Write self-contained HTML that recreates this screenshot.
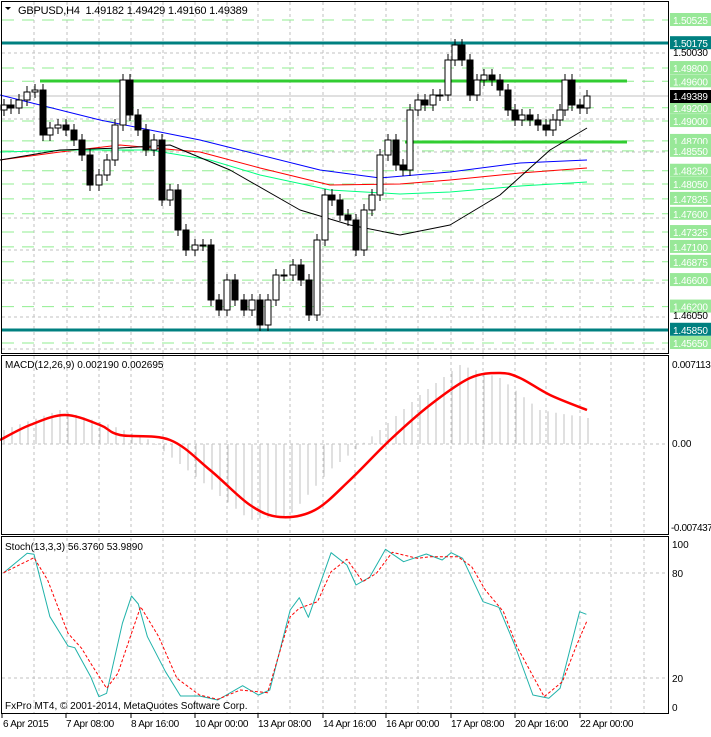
<!DOCTYPE html><html><head><style>
body{margin:0;background:#fff;width:711px;height:732px;overflow:hidden;font-family:"Liberation Sans",sans-serif}
svg text{font-family:"Liberation Sans",sans-serif;font-size:10px}
svg text.t{font-size:11px}
</style></head><body>
<svg id="s" width="711" height="732" xmlns="http://www.w3.org/2000/svg"></svg>
<script>
var s=document.getElementById('s'),h='';
function L(x1,y1,x2,y2,c,w,d){h+='<line x1="'+x1+'" y1="'+y1+'" x2="'+x2+'" y2="'+y2+'" stroke="'+c+'" stroke-width="'+(w||1)+'"'+(d?' stroke-dasharray="'+d+'"':'')+'/>';}
function P(pts,c,w,d){h+='<polyline fill="none" stroke-linejoin="round" points="'+pts.map(p=>p[0]+','+p[1]).join(' ')+'" stroke="'+c+'" stroke-width="'+(w||1)+'"'+(d?' stroke-dasharray="'+d+'"':'')+'/>';}
function T(x,y,t,c,a,cls,ls){h+='<text x="'+x+'" y="'+y+'" fill="'+(c||'#000')+'"'+(a?' text-anchor="'+a+'"':'')+(cls?' class="'+cls+'"':'')+(ls?' letter-spacing="'+ls+'"':'')+'>'+t+'</text>';}
var gx=[34,67,99,131,163,195,227,258,290,323,355,386,418,451,483,515,546,580,611,644];
gx.forEach(x=>{L(x,2,x,353,'#c0c0c0',1,'3,3');L(x,356,x,534,'#c0c0c0',1,'3,3');L(x,538,x,713,'#c0c0c0',1,'3,3');});
[53,119,152,218,250,283,317,349].forEach(y=>L(2,y,668,y,'#c0c0c0',1,'3,3'));
function Y(p){return 20+(1.50525-p)*6626;}
var gl=[1.50525,1.49800,1.49600,1.49200,1.49000,1.48700,1.48550,1.48250,1.48050,1.47825,1.47600,1.47325,1.47100,1.46875,1.46600,1.46200,1.45650];
gl.forEach(p=>L(2,Y(p).toFixed(1),668,Y(p).toFixed(1),'#90ee90',1,'12,8'));
L(2,43,668,43,'#008080',3);L(2,330,668,330,'#008080',3);
L(40,81,627,81,'#32cd32',3);L(405,142,627,142,'#32cd32',3);
L(2,96,668,96,'#c0c0c0',1);
P([[0,95],[100,120],[200,140],[320,170],[380,178],[450,172],[520,163],[587,160]],'#0000ff');
P([[0,160],[60,152],[120,145],[200,152],[260,168],[330,185],[400,184],[450,180],[520,173],[587,168]],'#ff0000');
P([[0,152],[80,150],[150,150],[210,160],[260,175],[330,190],[400,194],[450,192],[520,186],[587,182]],'#00ff7f');
P([[0,160],[60,150],[120,148],[170,145],[230,170],[300,210],[350,225],[400,235],[450,225],[500,195],[550,150],[587,128]],'#000');
var cl=[[4,105],[11,108],[19,100],[27,92],[35,90],[43,135],[50,128],[58,125],[66,130],[74,140],[82,155],[90,185],[99,175],[107,160],[115,125],[123,80],[130,115],[138,130],[146,150],[154,140],[162,200],[170,190],[178,230],[186,250],[195,245],[203,245],[211,300],[219,310],[227,280],[235,300],[244,310],[252,300],[260,325],[268,300],[276,275],[284,275],[293,265],[301,280],[309,315],[317,240],[325,195],[332,200],[340,215],[348,220],[356,250],[364,210],[372,195],[380,155],[388,140],[396,165],[403,170],[410,110],[418,100],[425,105],[433,95],[440,95],[448,60],[455,45],[462,60],[470,95],[477,80],[484,75],[492,80],[500,90],[508,110],[515,120],[522,115],[530,120],[538,125],[546,130],[553,120],[560,110],[565,80],[572,105],[580,108],[587,96]];
var prev=110;
cl.forEach(c=>{var o=prev,cc=c[1],t=Math.min(o,cc),b=Math.max(o,cc);L(c[0],t-6,c[0],b+6,'#000');
h+='<rect x="'+(c[0]-3)+'" y="'+t+'" width="6" height="'+Math.max(b-t,1)+'" fill="'+(cc<o?'#fff':'#000')+'" stroke="#000"/>';prev=cc;});
L(2,444,668,444,'#c0c0c0',1,'3,3');
var mv=[[4,430],[60,410],[110,425],[150,440],[200,480],[250,520],[290,515],[330,470],[380,430],[420,395],[460,365],[500,378],[540,410],[587,418]];
function interp(arr,x){for(var i=0;i<arr.length-1;i++){if(x>=arr[i][0]&&x<=arr[i+1][0]){var t=(x-arr[i][0])/(arr[i+1][0]-arr[i][0]);return arr[i][1]+t*(arr[i+1][1]-arr[i][1]);}}return arr[arr.length-1][1];}
for(var x=4;x<=588;x+=8)L(x,444,x,interp(mv,x).toFixed(1),'#c0c0c0');
var sig=[[0,440],[30,425],[65,415],[100,425],[120,435],[170,440],[210,470],[250,505],[280,517],[315,510],[350,480],[390,440],[430,405],[470,378],[500,373],[520,378],[550,395],[587,410]];
// smooth via catmull-rom
var d='M'+sig[0][0]+','+sig[0][1];
for(var i=0;i<sig.length-1;i++){var p0=sig[Math.max(i-1,0)],p1=sig[i],p2=sig[i+1],p3=sig[Math.min(i+2,sig.length-1)];
d+=' C'+(p1[0]+(p2[0]-p0[0])/6)+','+(p1[1]+(p2[1]-p0[1])/6)+' '+(p2[0]-(p3[0]-p1[0])/6)+','+(p2[1]-(p3[1]-p1[1])/6)+' '+p2[0]+','+p2[1];}
h+='<path d="'+d+'" fill="none" stroke="#ff0000" stroke-width="2.5"/>';
L(2,573,668,573,'#c0c0c0',1,'3,3');L(2,678,668,678,'#c0c0c0',1,'3,3');
function cv(a){return a.map(p=>[(p[0]/2.205).toFixed(1),(p[1]/3+520).toFixed(1)]);}
P(cv([[8,158],[60,100],[75,103],[110,290],[150,378],[165,383],[200,470],[218,530],[235,520],[270,310],[290,228],[305,252],[325,350],[365,455],[398,528],[440,528],[480,540],[535,497],[570,525],[595,510],[640,270],[660,233],[680,292],[730,98],[765,135],[785,195],[815,172],[850,88],[890,125],[940,102],[975,120],[995,98],[1020,115],[1065,245],[1100,262],[1135,375],[1175,525],[1210,535],[1235,505],[1278,275],[1293,283]]),'#20b2aa');
P(cv([[8,158],[75,113],[105,180],[150,340],[180,385],[200,430],[235,505],[260,460],[290,340],[310,260],[350,350],[390,475],[440,525],[480,538],[530,510],[590,518],[640,290],[660,265],[700,245],[730,155],[765,118],[800,185],[830,160],[865,97],[920,115],[950,110],[1010,110],[1040,140],[1070,210],[1110,275],[1140,380],[1200,530],[1240,485],[1270,380],[1295,300]]),'#ff0000',1,'3,2');
h+='<rect x="1.5" y="1.5" width="667" height="352" fill="none" stroke="#000"/>';
h+='<rect x="1.5" y="355.5" width="667" height="179" fill="none" stroke="#000"/>';
h+='<rect x="1.5" y="536.5" width="667" height="177" fill="none" stroke="#000"/>';
gl.forEach(p=>{var y=Y(p);h+='<rect x="670" y="'+(y-7)+'" width="41" height="13" fill="#98e898"/>';T(673,y+4,p.toFixed(5),'#fff','','', '-0.2');});
[1.50175,1.45850].forEach(v=>{var y=Y(v);h+='<rect x="670" y="'+(y-7)+'" width="41" height="13" fill="#008080"/>';T(673,y+4,v.toFixed(5),'#fff','','','-0.2');});
h+='<rect x="670" y="90" width="41" height="13" fill="#000"/>';T(673,100,'1.49389','#fff','','','-0.2');
T(673,56,'1.50030','#000','','','-0.2');T(673,319,'1.46050','#000','','','-0.2');
T(672,368,'0.007113','#000','','','-0.3');T(672,447,'0.00');T(671,531,'-0.007437','#000','','','-0.4');
T(672,548,'100');T(672,577,'80');T(672,682,'20');T(672,711,'0');
h+='<path d="M5 7 L11 7 L8 10 Z" fill="#000"/>';
T(18,14,'GBPUSD,H4&#160; 1.49182 1.49429 1.49160 1.49389','#000','','t','-0.2');
T(5,368,'MACD(12,26,9) 0.002190 0.002695');
T(5,550,'Stoch(13,3,3) 56.3760 53.9890');
T(5,709,'FxPro MT4, © 2001-2014, MetaQuotes Software Corp.');
[[3,'6 Apr 2015'],[66,'7 Apr 08:00'],[131,'8 Apr 16:00'],[195,'10 Apr 00:00'],[258,'13 Apr 08:00'],[323,'14 Apr 16:00'],[386,'16 Apr 00:00'],[451,'17 Apr 08:00'],[515,'20 Apr 16:00'],[580,'22 Apr 00:00']].forEach(a=>{var xx=a[0]===3?2:a[0];L(xx,714,xx,718,'#000');T(a[0],727,a[1],'#000','','','-0.3');});
s.innerHTML=h;
</script></body></html>
